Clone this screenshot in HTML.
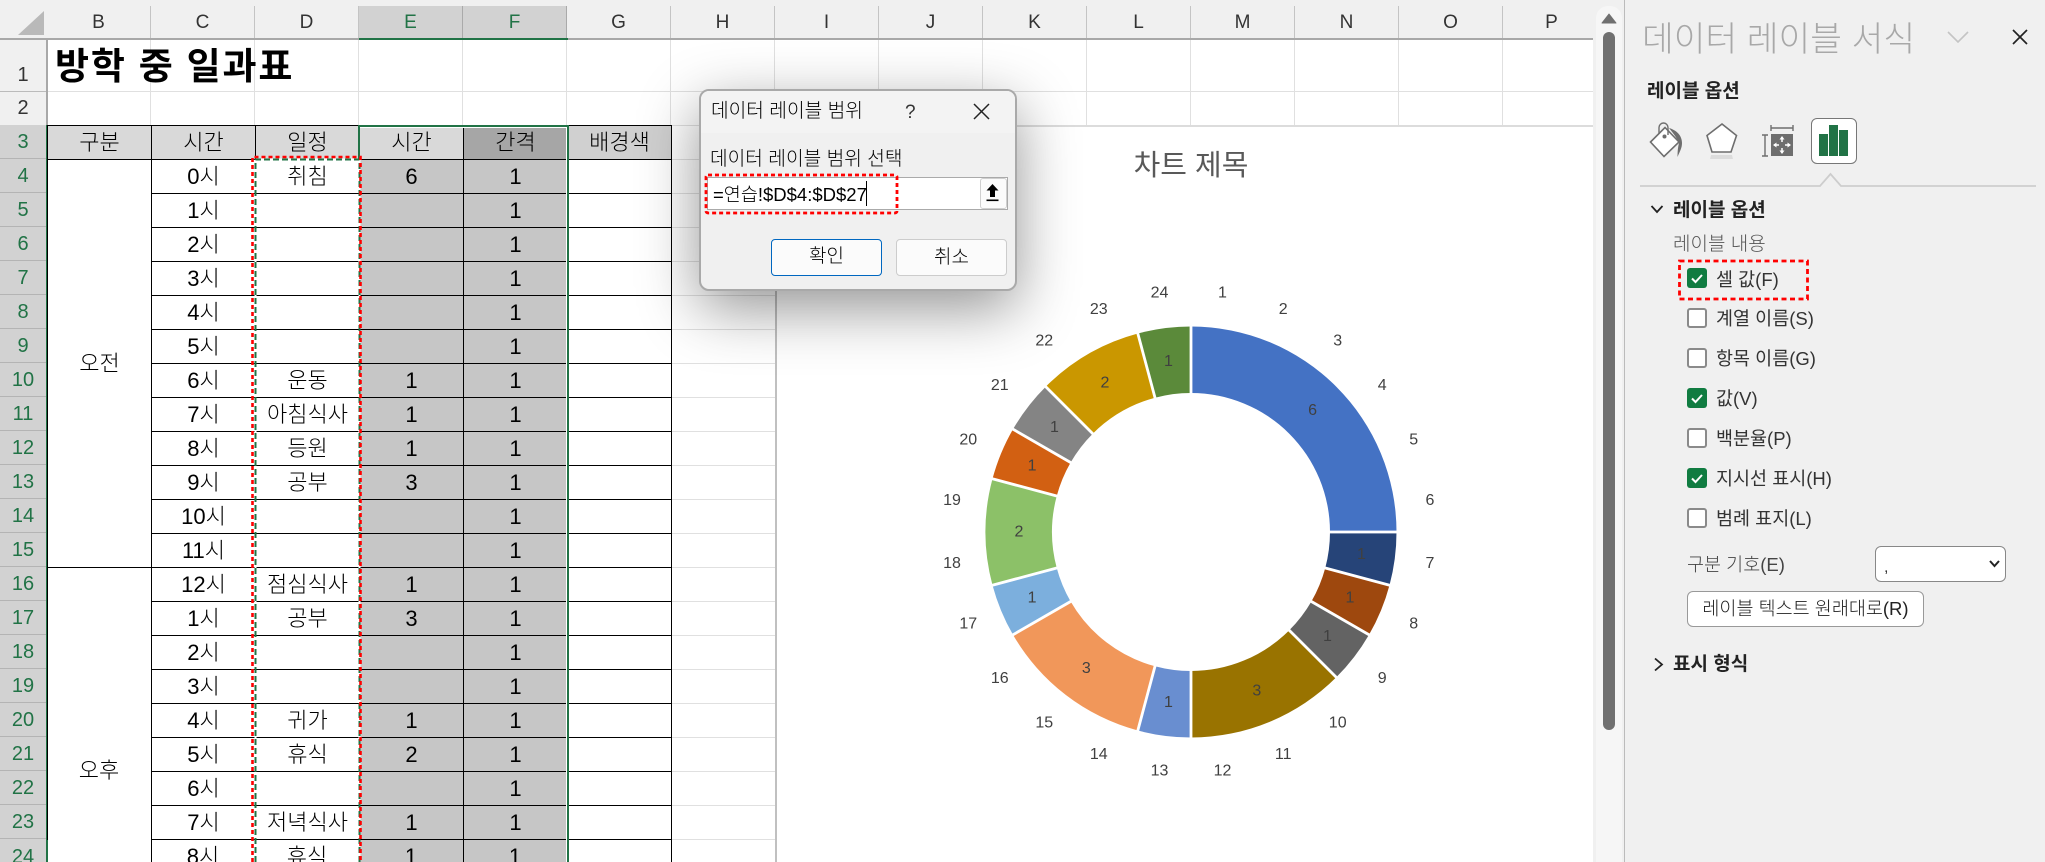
<!DOCTYPE html>
<html lang="ko">
<head>
<meta charset="utf-8">
<title>데이터 레이블 범위</title>
<style>
html,body{margin:0;padding:0;width:2045px;height:862px;overflow:hidden}
body{background:#fff;font-family:"Liberation Sans","Noto Sans CJK KR",sans-serif;color:#000}
#w{position:relative;width:2045px;height:862px;overflow:hidden;background:#fff}
.a{position:absolute;white-space:nowrap}
.ch{position:absolute;top:6px;height:33px;line-height:34px;width:103px;text-align:center;font-size:19px;color:#333;background:#f0f0f0;border-right:1px solid #c4c4c4}
.ch.s{background:#d2d2d2;color:#217346;border-right-color:#aaa}
.rh{position:absolute;left:0;width:46px;height:33px;line-height:34px;text-align:center;font-size:20px;background:#d2d2d2;color:#217346;border-bottom:1px solid #b4b4b4}
table{position:absolute;left:47px;top:125px;border-collapse:collapse;table-layout:fixed;width:624px}
td{border:1px solid #000;height:32px;padding:1px 0 0;text-align:center;font-size:22px;line-height:28px;overflow:hidden;white-space:nowrap;box-sizing:content-box;font-weight:300}
col{width:104px}
tr.h td{background:#d9d9d9}
td.g{background:#c6c6c6}
td.m{background:#fff}
.cb{position:absolute;left:1687px;width:20px;height:20px;box-sizing:border-box;border-radius:3px}
.cb.on{background:#107c41}
.cb.off{background:#fff;border:2px solid #8a8a8a}
.lb{position:absolute;left:1716px;font-size:18.5px;color:#333;white-space:nowrap;line-height:24px;height:24px}
</style>
</head>
<body>
<div id="w">

<!-- sheet base grid -->
<div class="a" style="left:47px;top:39px;width:1546px;height:823px;background:
linear-gradient(#e0e0e0,#e0e0e0) 0 52px/1546px 1px no-repeat,
linear-gradient(#e0e0e0,#e0e0e0) 0 86px/1546px 1px no-repeat,
repeating-linear-gradient(to right,transparent 0,transparent 103px,#e0e0e0 103px,#e0e0e0 104px) 0 0/1546px 86px no-repeat,
repeating-linear-gradient(to bottom,transparent 0,transparent 33px,#e0e0e0 33px,#e0e0e0 34px) 624px 87px/104px 736px no-repeat"></div>

<!-- top strip -->
<div class="a" style="left:0;top:0;width:1594px;height:6px;background:#f0f0f0"></div>

<!-- column headers -->
<div class="a" style="left:0;top:6px;width:47px;height:33px;background:#f0f0f0"></div>
<svg class="a" style="left:0;top:0" width="47" height="40"><polygon points="44,11 44,35 18,35" fill="#b9b9b9"/></svg>
<div class="ch" style="left:47px">B</div>
<div class="ch" style="left:151px">C</div>
<div class="ch" style="left:255px">D</div>
<div class="ch s" style="left:359px">E</div>
<div class="ch s" style="left:463px">F</div>
<div class="ch" style="left:567px">G</div>
<div class="ch" style="left:671px">H</div>
<div class="ch" style="left:775px">I</div>
<div class="ch" style="left:879px">J</div>
<div class="ch" style="left:983px">K</div>
<div class="ch" style="left:1087px">L</div>
<div class="ch" style="left:1191px">M</div>
<div class="ch" style="left:1295px">N</div>
<div class="ch" style="left:1399px">O</div>
<div class="ch" style="left:1503px;width:90px;text-indent:7px;border-right:0">P</div>
<div class="a" style="left:0;top:38px;width:1594px;height:2px;background:#a8a8a8"></div>
<div class="a" style="left:359px;top:38px;width:209px;height:2px;background:#217346"></div>

<!-- row headers -->
<div class="a" style="left:0;top:40px;width:46px;height:51px;line-height:70px;text-align:center;font-size:20px;color:#333;background:#f0f0f0;border-bottom:1px solid #bbb;overflow:hidden">1</div>
<div class="a" style="left:0;top:92px;width:46px;height:33px;line-height:33px;text-align:center;font-size:20px;color:#333;background:#f0f0f0">2</div>
<div class="rh" style="top:125px">3</div>
<div class="rh" style="top:159px">4</div>
<div class="rh" style="top:193px">5</div>
<div class="rh" style="top:227px">6</div>
<div class="rh" style="top:261px">7</div>
<div class="rh" style="top:295px">8</div>
<div class="rh" style="top:329px">9</div>
<div class="rh" style="top:363px">10</div>
<div class="rh" style="top:397px">11</div>
<div class="rh" style="top:431px">12</div>
<div class="rh" style="top:465px">13</div>
<div class="rh" style="top:499px">14</div>
<div class="rh" style="top:533px">15</div>
<div class="rh" style="top:567px">16</div>
<div class="rh" style="top:601px">17</div>
<div class="rh" style="top:635px">18</div>
<div class="rh" style="top:669px">19</div>
<div class="rh" style="top:703px">20</div>
<div class="rh" style="top:737px">21</div>
<div class="rh" style="top:771px">22</div>
<div class="rh" style="top:805px">23</div>
<div class="a" style="left:0;top:839px;width:46px;height:23px;background:#d2d2d2"></div>
<div class="a" style="left:46px;top:40px;width:2px;height:85px;background:#a8a8a8"></div>
<div class="a" style="left:46px;top:125px;width:2px;height:737px;background:#217346"></div>

<!-- title -->
<div class="a" style="left:55px;top:42px;height:50px;line-height:50px;font-size:37px;font-weight:700;letter-spacing:1.8px">방학 중 일과표</div>

<!-- row 24 cell backgrounds and lines -->
<div class="a" style="left:359px;top:839px;width:208px;height:23px;background:#c6c6c6"></div>
<div class="a" style="left:151px;top:839px;width:1px;height:23px;background:#000"></div>
<div class="a" style="left:255px;top:839px;width:1px;height:23px;background:#000"></div>
<div class="a" style="left:359px;top:839px;width:1px;height:23px;background:#000"></div>
<div class="a" style="left:463px;top:839px;width:1px;height:23px;background:#000"></div>
<div class="a" style="left:567px;top:839px;width:1px;height:23px;background:#000"></div>
<div class="a" style="left:671px;top:839px;width:1px;height:23px;background:#000"></div>

<!-- table rows 3-23 -->
<table>
<colgroup><col><col><col><col><col><col></colgroup>
<tr class="h"><td>구분</td><td>시간</td><td>일정</td><td>시간</td><td style="background:#a6a6a6">간격</td><td style="background:#d0d0d0">배경색</td></tr>
<tr><td rowspan="12" class="m">오전</td><td>0시</td><td>취침</td><td class="g">6</td><td class="g">1</td><td></td></tr>
<tr><td>1시</td><td></td><td class="g"></td><td class="g">1</td><td></td></tr>
<tr><td>2시</td><td></td><td class="g"></td><td class="g">1</td><td></td></tr>
<tr><td>3시</td><td></td><td class="g"></td><td class="g">1</td><td></td></tr>
<tr><td>4시</td><td></td><td class="g"></td><td class="g">1</td><td></td></tr>
<tr><td>5시</td><td></td><td class="g"></td><td class="g">1</td><td></td></tr>
<tr><td>6시</td><td>운동</td><td class="g">1</td><td class="g">1</td><td></td></tr>
<tr><td>7시</td><td>아침식사</td><td class="g">1</td><td class="g">1</td><td></td></tr>
<tr><td>8시</td><td>등원</td><td class="g">1</td><td class="g">1</td><td></td></tr>
<tr><td>9시</td><td>공부</td><td class="g">3</td><td class="g">1</td><td></td></tr>
<tr><td>10시</td><td></td><td class="g"></td><td class="g">1</td><td></td></tr>
<tr><td>11시</td><td></td><td class="g"></td><td class="g">1</td><td></td></tr>
<tr><td rowspan="8" class="m" style="border-bottom:0"></td><td>12시</td><td>점심식사</td><td class="g">1</td><td class="g">1</td><td></td></tr>
<tr><td>1시</td><td>공부</td><td class="g">3</td><td class="g">1</td><td></td></tr>
<tr><td>2시</td><td></td><td class="g"></td><td class="g">1</td><td></td></tr>
<tr><td>3시</td><td></td><td class="g"></td><td class="g">1</td><td></td></tr>
<tr><td>4시</td><td>귀가</td><td class="g">1</td><td class="g">1</td><td></td></tr>
<tr><td>5시</td><td>휴식</td><td class="g">2</td><td class="g">1</td><td></td></tr>
<tr><td>6시</td><td></td><td class="g"></td><td class="g">1</td><td></td></tr>
<tr><td>7시</td><td>저녁식사</td><td class="g">1</td><td class="g">1</td><td></td></tr>
</table>
<div class="a" style="left:47px;top:757px;width:104px;height:28px;line-height:28px;text-align:center;font-size:22px;font-weight:300">오후</div>

<!-- selection overlays and row 24 text -->
<svg class="a" style="left:0;top:0" width="800" height="862">
<rect x="360" y="127" width="206" height="1" fill="#fff"/>
<rect x="566" y="127" width="1" height="735" fill="#fff"/>
<path d="M359 160V126H568V862" fill="none" stroke="#217346" stroke-width="2"/>
<path d="M255.500 862V159.500H359.500V862" fill="none" stroke="#fff" stroke-width="2"/>
<path d="M255.500 862V159.500H359.500V862" fill="none" stroke="#217346" stroke-width="2" stroke-dasharray="6 3"/>
<path d="M252.500 862V157H360.500V862" fill="none" stroke="#f00" stroke-width="2.600" stroke-dasharray="4 3"/>
<g font-family="Liberation Sans, Noto Sans CJK KR, sans-serif" font-size="22" font-weight="300" text-anchor="middle" fill="#000">
<text x="203" y="864">8시</text>
<text x="307" y="864">휴식</text>
<text x="411" y="864">1</text>
<text x="515" y="864">1</text>
</g>
<text x="23" y="863" font-family="Liberation Sans, sans-serif" font-size="20" text-anchor="middle" fill="#217346">24</text>
</svg>

<!-- chart -->
<div class="a" style="left:775px;top:125px;width:818px;height:737px;background:#fff;border-top:2px solid #dcdcdc;border-left:2px solid #c0c0c0;box-sizing:border-box"></div>
<div class="a" style="left:1091px;top:146px;width:200px;height:40px;line-height:40px;text-align:center;font-size:29px;color:#595959">차트 제목</div>
<svg class="a" style="left:0;top:0" width="1600" height="862" font-family="Liberation Sans" font-size="16" fill="#404040" text-anchor="middle">
<path fill="#4472C4" d="M1191 326.500A205.500 205.500 0 0 1 1396.500 532H1330A139 139 0 0 0 1191 393Z"/>
<path fill="#264478" d="M1396.500 532A205.500 205.500 0 0 1 1389.500 585.200L1325.260 567.980A139 139 0 0 0 1330 532Z"/>
<path fill="#9E480E" d="M1389.500 585.200A205.500 205.500 0 0 1 1369 634.750L1311.380 601.500A139 139 0 0 0 1325.260 567.980Z"/>
<path fill="#636363" d="M1369 634.750A205.500 205.500 0 0 1 1336.300 677.300L1289.290 630.290A139 139 0 0 0 1311.380 601.500Z"/>
<path fill="#997300" d="M1336.300 677.300A205.500 205.500 0 0 1 1191 737.500V671A139 139 0 0 0 1289.290 630.290Z"/>
<path fill="#698ED0" d="M1191 737.500A205.500 205.500 0 0 1 1137.800 730.500L1155.020 666.260A139 139 0 0 0 1191 671Z"/>
<path fill="#F1975A" d="M1137.800 730.500A205.500 205.500 0 0 1 1013 634.750L1070.620 601.500A139 139 0 0 0 1155.020 666.260Z"/>
<path fill="#7CAFDD" d="M1013 634.750A205.500 205.500 0 0 1 992.500 585.200L1056.740 567.980A139 139 0 0 0 1070.620 601.500Z"/>
<path fill="#8CC168" d="M992.500 585.200A205.500 205.500 0 0 1 992.500 478.800L1056.740 496.020A139 139 0 0 0 1056.740 567.980Z"/>
<path fill="#D26012" d="M992.500 478.800A205.500 205.500 0 0 1 1013 429.250L1070.620 462.500A139 139 0 0 0 1056.740 496.020Z"/>
<path fill="#848484" d="M1013 429.250A205.500 205.500 0 0 1 1045.700 386.700L1092.710 433.710A139 139 0 0 0 1070.620 462.500Z"/>
<path fill="#CA9700" d="M1045.700 386.700A205.500 205.500 0 0 1 1137.800 333.500L1155.020 397.740A139 139 0 0 0 1092.710 433.710Z"/>
<path fill="#5B8A3A" d="M1137.800 333.500A205.500 205.500 0 0 1 1191 326.500V393A139 139 0 0 0 1155.020 397.740Z"/>
<g fill="#fff">
<rect x="1189.6" y="322" width="2.8" height="72"/>
<rect x="1189.6" y="322" width="2.8" height="72" transform="rotate(90 1191 532)"/>
<rect x="1189.6" y="322" width="2.8" height="72" transform="rotate(105 1191 532)"/>
<rect x="1189.6" y="322" width="2.8" height="72" transform="rotate(120 1191 532)"/>
<rect x="1189.6" y="322" width="2.8" height="72" transform="rotate(135 1191 532)"/>
<rect x="1189.6" y="322" width="2.8" height="72" transform="rotate(180 1191 532)"/>
<rect x="1189.6" y="322" width="2.8" height="72" transform="rotate(195 1191 532)"/>
<rect x="1189.6" y="322" width="2.8" height="72" transform="rotate(240 1191 532)"/>
<rect x="1189.6" y="322" width="2.8" height="72" transform="rotate(255 1191 532)"/>
<rect x="1189.6" y="322" width="2.8" height="72" transform="rotate(285 1191 532)"/>
<rect x="1189.6" y="322" width="2.8" height="72" transform="rotate(300 1191 532)"/>
<rect x="1189.6" y="322" width="2.8" height="72" transform="rotate(315 1191 532)"/>
<rect x="1189.6" y="322" width="2.8" height="72" transform="rotate(345 1191 532)"/>
</g>
<g dominant-baseline="central">
<text x="1222.5" y="293">1</text><text x="1283.2" y="309.3">2</text><text x="1337.7" y="340.8">3</text><text x="1382.2" y="385.3">4</text><text x="1413.7" y="439.8">5</text><text x="1430" y="500.5">6</text>
<text x="1430" y="563.5">7</text><text x="1413.7" y="624.2">8</text><text x="1382.2" y="678.7">9</text><text x="1337.7" y="723.2">10</text><text x="1283.2" y="754.7">11</text><text x="1222.5" y="771">12</text>
<text x="1159.5" y="771">13</text><text x="1098.8" y="754.7">14</text><text x="1044.3" y="723.2">15</text><text x="999.8" y="678.7">16</text><text x="968.3" y="624.2">17</text><text x="952" y="563.5">18</text>
<text x="952" y="500.5">19</text><text x="968.3" y="439.8">20</text><text x="999.8" y="385.3">21</text><text x="1044.3" y="340.8">22</text><text x="1098.8" y="309.3">23</text><text x="1159.5" y="293">24</text>
<text x="1312.6" y="410.4">6</text><text x="1361.5" y="554.5">1</text><text x="1349.9" y="597.8">1</text><text x="1327.5" y="636.7">1</text><text x="1256.8" y="690.9">3</text><text x="1168.5" y="702.5">1</text>
<text x="1086.3" y="668.5">3</text><text x="1032.1" y="597.8">1</text><text x="1019" y="532">2</text><text x="1032.1" y="466.2">1</text><text x="1054.5" y="427.3">1</text><text x="1105" y="383">2</text><text x="1168.5" y="361.5">1</text>
</g>
</svg>

<!-- dialog -->
<div class="a" style="left:699px;top:89px;width:318px;height:202px;box-sizing:border-box;background:#f0f0f0;border:2px solid #a9a9a9;border-radius:10px;box-shadow:0 18px 60px rgba(0,0,0,.42)">
<div style="position:absolute;left:0;top:0;right:0;height:42px;background:#f3f3f3;border-radius:8px 8px 0 0"></div>
</div>
<div class="a" style="left:711px;top:98px;height:28px;line-height:28px;font-size:19.2px;color:#000;font-weight:300">데이터 레이블 범위</div>
<div class="a" style="left:905px;top:99px;height:28px;line-height:28px;font-size:19px;color:#333">?</div>
<svg class="a" style="left:973px;top:103px" width="17" height="17"><path d="M1 1L16 16M16 1L1 16" stroke="#222" stroke-width="1.5" fill="none"/></svg>
<div class="a" style="left:710px;top:146px;height:28px;line-height:28px;font-size:19.2px;color:#000;font-weight:300">데이터 레이블 범위 선택</div>
<div class="a" style="left:707px;top:177px;width:301px;height:33px;box-sizing:border-box;background:#fff;border:1px solid #aaa"></div>
<div class="a" style="left:713px;top:181px;height:28px;line-height:28px;font-size:18.5px;color:#000;font-weight:300">=연습!$D$4:$D$27</div>
<div class="a" style="left:866px;top:181px;width:1px;height:25px;background:#000"></div>
<div class="a" style="left:980px;top:178px;width:27px;height:31px;box-sizing:border-box;background:#fbfbfb;border:1px solid #cfcfcf;border-radius:3px"></div>
<svg class="a" style="left:984px;top:182px" width="18" height="22"><path d="M6 15V8.500H2.500L8.500 2 14.500 8.500H11V15Z" fill="#000"/><rect x="2.500" y="17.500" width="12" height="1.600" fill="#000"/></svg>
<div class="a" style="left:771px;top:239px;width:111px;height:37px;box-sizing:border-box;background:#fbfbfb;border:1.5px solid #0067c0;border-radius:4px;text-align:center;line-height:34px;font-size:19px;color:#000;font-weight:300">확인</div>
<div class="a" style="left:896px;top:239px;width:111px;height:37px;box-sizing:border-box;background:#fbfbfb;border:1px solid #ccc;border-radius:4px;text-align:center;line-height:35px;font-size:19px;color:#000;font-weight:300">취소</div>
<svg class="a" style="left:700px;top:170px" width="205" height="50"><rect x="6" y="5" width="191" height="38" rx="2" fill="none" stroke="#f00" stroke-width="2.8" stroke-dasharray="4 3"/></svg>

<!-- scrollbar -->
<div class="a" style="left:1593px;top:0;width:31px;height:862px;background:#f0f0f0"></div>
<div class="a" style="left:1596px;top:6px;width:26px;height:856px;background:#f6f6f6;border-radius:12px 12px 0 0"></div>
<svg class="a" style="left:1601px;top:13px" width="16" height="12"><path d="M8 1L15 10H1Z" fill="#707070" stroke="#707070" stroke-linejoin="round"/></svg>
<div class="a" style="left:1603px;top:32px;width:12px;height:698px;background:#707070;border-radius:6px"></div>

<!-- panel -->
<div class="a" style="left:1624px;top:0;width:421px;height:862px;background:#f0f0f0;border-left:1.5px solid #bbb;box-sizing:border-box"></div>
<div class="a" style="left:1642px;top:18px;height:44px;line-height:44px;font-size:34.5px;color:#a8a8a8;font-weight:300">데이터 레이블 서식</div>
<svg class="a" style="left:1947px;top:30px" width="22" height="14"><path d="M1 2L11 12 21 2" stroke="#c4c4c4" stroke-width="1.6" fill="none"/></svg>
<svg class="a" style="left:2011px;top:28px" width="18" height="18"><path d="M2 2L16 16M16 2L2 16" stroke="#222" stroke-width="1.7" fill="none"/></svg>
<div class="a" style="left:1647px;top:79px;height:26px;line-height:26px;font-size:19px;font-weight:700;color:#222">레이블 옵션</div>

<!-- tab icons -->
<svg class="a" style="left:1640px;top:115px" width="160" height="50">
<path d="M10.5 27L25 12.5 39 27 24 41.5Z" fill="#fff" stroke="#6e6e6e" stroke-width="1.6"/>
<path d="M19 19V12.5A4.500 4.500 0 0 1 28 12.500V20" fill="none" stroke="#6e6e6e" stroke-width="1.4"/>
<circle cx="24.500" cy="21.500" r="2" fill="#6e6e6e"/>
<path d="M29 13C36 15 42 20 42 28 42 33 40 36 37.500 42 37.500 36 38 32 39 28 37 23 33 18 29 13Z" fill="#6e6e6e"/>
<path d="M82 9L96.500 20.500 91 37H72L67 20.500Z" fill="#fff" stroke="#6e6e6e" stroke-width="1.6"/>
<path d="M71 40H92L93 44H70Z" fill="#dcdcdc"/>
<path d="M131 10V16M131 13H153M153 10V16" stroke="#6e6e6e" stroke-width="1.4" fill="none"/>
<path d="M122 20H128M125 20V41M122 41H128" stroke="#6e6e6e" stroke-width="1.4" fill="none"/>
<rect x="131" y="19" width="22" height="22" fill="#6e6e6e"/>
<path d="M142 22V27M142 33V38M134 30H139M145 30H150" stroke="#fff" stroke-width="1.5" fill="none"/>
<path d="M142 21L139.500 24.500H144.500ZM142 39L139.500 35.500H144.500ZM133 30L136.500 27.500V32.500ZM151 30L147.500 27.500V32.500Z" fill="#fff"/>
</svg>
<div class="a" style="left:1811px;top:118px;width:46px;height:46px;box-sizing:border-box;background:#fff;border:1px solid #777;border-radius:6px"></div>
<div class="a" style="left:1819px;top:134px;width:9px;height:22px;background:#217346"></div>
<div class="a" style="left:1829px;top:125px;width:9px;height:31px;background:#217346"></div>
<div class="a" style="left:1839px;top:130px;width:9px;height:26px;background:#217346"></div>

<svg class="a" style="left:1640px;top:170px" width="400" height="20"><path d="M0 16H180L190.500 4 201 16H396" fill="none" stroke="#cdcdcd" stroke-width="1.8"/></svg>

<svg class="a" style="left:1650px;top:204px" width="14" height="12"><path d="M1.500 2L7 8 12.500 2" fill="none" stroke="#222" stroke-width="1.8"/></svg>
<div class="a" style="left:1673px;top:198px;height:26px;line-height:26px;font-size:19px;font-weight:700;color:#222">레이블 옵션</div>
<div class="a" style="left:1673px;top:232px;height:26px;line-height:26px;font-size:19px;color:#555;font-weight:300">레이블 내용</div>

<div class="cb on" style="top:268px"><svg width="20" height="20"><path d="M5 10.500L8.500 14 15 7" fill="none" stroke="#fff" stroke-width="2"/></svg></div>
<div class="lb" style="top:268px">셀 값(F)</div>
<div class="cb off" style="top:308px"></div>
<div class="lb" style="top:307px">계열 이름(S)</div>
<div class="cb off" style="top:348px"></div>
<div class="lb" style="top:347px">항목 이름(G)</div>
<div class="cb on" style="top:388px"><svg width="20" height="20"><path d="M5 10.500L8.500 14 15 7" fill="none" stroke="#fff" stroke-width="2"/></svg></div>
<div class="lb" style="top:387px">값(V)</div>
<div class="cb off" style="top:428px"></div>
<div class="lb" style="top:427px">백분율(P)</div>
<div class="cb on" style="top:468px"><svg width="20" height="20"><path d="M5 10.500L8.500 14 15 7" fill="none" stroke="#fff" stroke-width="2"/></svg></div>
<div class="lb" style="top:467px">지시선 표시(H)</div>
<div class="cb off" style="top:508px"></div>
<div class="lb" style="top:507px">범례 표지(L)</div>
<svg class="a" style="left:1676px;top:257px" width="136" height="46"><rect x="3.500" y="4" width="128" height="38" fill="none" stroke="#f00" stroke-width="2.800" stroke-dasharray="5 3.500"/></svg>

<div class="a" style="left:1687px;top:552px;height:26px;line-height:26px;font-size:18.500px;color:#444;font-weight:300">구분 기호(E)</div>
<div class="a" style="left:1875px;top:546px;width:131px;height:36px;box-sizing:border-box;background:#fff;border:1px solid #888;border-radius:6px"></div>
<div class="a" style="left:1884px;top:558px;height:20px;line-height:20px;font-size:16px;color:#333">,</div>
<svg class="a" style="left:1988px;top:559px" width="13" height="10"><path d="M2 2L6.500 7 11 2" fill="none" stroke="#222" stroke-width="2"/></svg>
<div class="a" style="left:1687px;top:591px;width:237px;height:36px;box-sizing:border-box;background:#fff;border:1px solid #999;border-radius:6px;text-align:center;line-height:34px;font-size:18.500px;color:#222;font-weight:300">레이블 텍스트 원래대로(R)</div>

<svg class="a" style="left:1653px;top:657px" width="12" height="15"><path d="M2 1.500L9 7.500 2 13.500" fill="none" stroke="#222" stroke-width="1.800"/></svg>
<div class="a" style="left:1673px;top:652px;height:26px;line-height:26px;font-size:19px;font-weight:700;color:#222">표시 형식</div>

</div>
</body>
</html>
